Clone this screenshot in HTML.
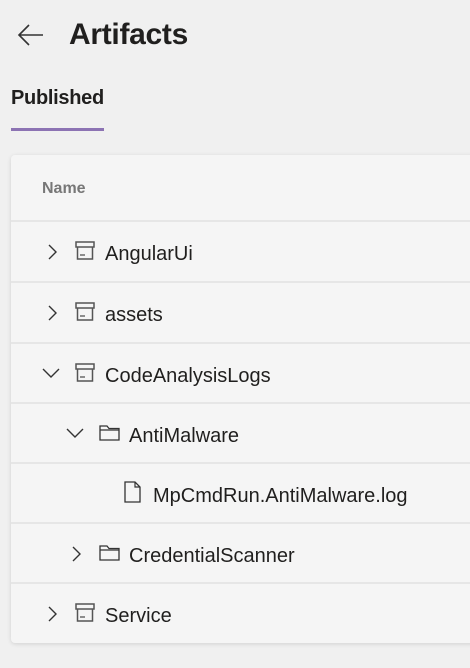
<!DOCTYPE html>
<html><head><style>
body{margin:0;width:470px;height:668px;background:#f0f0f0;font-family:"Liberation Sans",sans-serif;color:#201f1e;overflow:hidden;position:relative}
.abs{position:absolute}
.card{position:absolute;left:11px;top:155px;width:470px;height:488px;background:#f5f5f5;border-radius:4px;box-shadow:0 1px 4px rgba(0,0,0,0.13)}
.row{position:absolute;left:0;width:470px;height:60px;border-top:2px solid #e6e6e6}
.t{position:absolute;font-size:20px;line-height:24px;top:20px}
svg{position:absolute}
</style></head><body>
<svg style="left:17px;top:24px" width="28" height="22" viewBox="0 0 28 22"><path d="M26 11H2M12 1L2 11l10 10" fill="none" stroke="#333" stroke-width="1.6"/></svg>
<div class="abs" style="left:69px;top:18px;font-size:30px;font-weight:bold;letter-spacing:-0.3px">Artifacts</div>
<div class="abs" style="left:11px;top:87px;font-size:20px;font-weight:bold;letter-spacing:-0.3px">Published</div>
<div class="abs" style="left:11px;top:128px;width:93px;height:3px;background:#8c73b3"></div>
<div class="card">
<div class="abs" style="left:31px;top:25px;font-size:16px;font-weight:bold;color:#777">Name</div>
<div class="row" style="top:65px"><svg style="left:35px;top:20px" width="12" height="20"><path d="M3 3l7 7-7 7" fill="none" stroke="#333" stroke-width="1.4"/></svg><svg style="left:64px;top:19px" width="20" height="20"><rect x="1" y="1" width="18" height="5" fill="none" stroke="#555" stroke-width="1.5"/><path d="M2.5 6v12h15V6" fill="none" stroke="#555" stroke-width="1.5"/><path d="M5 14h5" stroke="#555" stroke-width="1.3"/></svg><div class="t" style="left:94px">AngularUi</div></div>
<div class="row" style="top:126px"><svg style="left:35px;top:20px" width="12" height="20"><path d="M3 3l7 7-7 7" fill="none" stroke="#333" stroke-width="1.4"/></svg><svg style="left:64px;top:19px" width="20" height="20"><rect x="1" y="1" width="18" height="5" fill="none" stroke="#555" stroke-width="1.5"/><path d="M2.5 6v12h15V6" fill="none" stroke="#555" stroke-width="1.5"/><path d="M5 14h5" stroke="#555" stroke-width="1.3"/></svg><div class="t" style="left:94px">assets</div></div>
<div class="row" style="top:187px"><svg style="left:30px;top:22px" width="20" height="12"><path d="M2 3l8 8 8-8" fill="none" stroke="#333" stroke-width="1.4"/></svg><svg style="left:64px;top:19px" width="20" height="20"><rect x="1" y="1" width="18" height="5" fill="none" stroke="#555" stroke-width="1.5"/><path d="M2.5 6v12h15V6" fill="none" stroke="#555" stroke-width="1.5"/><path d="M5 14h5" stroke="#555" stroke-width="1.3"/></svg><div class="t" style="left:94px">CodeAnalysisLogs</div></div>
<div class="row" style="top:247px"><svg style="left:54px;top:22px" width="20" height="12"><path d="M2 3l8 8 8-8" fill="none" stroke="#333" stroke-width="1.4"/></svg><svg style="left:88px;top:21px" width="21" height="17"><path d="M1 1h7l2 2.5h10V15H1z" fill="none" stroke="#333" stroke-width="1.3"/><path d="M1 5h19" stroke="#333" stroke-width="1.2"/></svg><div class="t" style="left:118px">AntiMalware</div></div>
<div class="row" style="top:307px"><svg style="left:113px;top:17px" width="18" height="22"><path d="M1 1h10l5 5v15H1z" fill="none" stroke="#333" stroke-width="1.3"/><path d="M11 1v5h5" fill="none" stroke="#333" stroke-width="1.2"/></svg><div class="t" style="left:142px">MpCmdRun.AntiMalware.log</div></div>
<div class="row" style="top:367px"><svg style="left:59px;top:20px" width="12" height="20"><path d="M3 3l7 7-7 7" fill="none" stroke="#333" stroke-width="1.4"/></svg><svg style="left:88px;top:21px" width="21" height="17"><path d="M1 1h7l2 2.5h10V15H1z" fill="none" stroke="#333" stroke-width="1.3"/><path d="M1 5h19" stroke="#333" stroke-width="1.2"/></svg><div class="t" style="left:118px">CredentialScanner</div></div>
<div class="row" style="top:427px"><svg style="left:35px;top:20px" width="12" height="20"><path d="M3 3l7 7-7 7" fill="none" stroke="#333" stroke-width="1.4"/></svg><svg style="left:64px;top:19px" width="20" height="20"><rect x="1" y="1" width="18" height="5" fill="none" stroke="#555" stroke-width="1.5"/><path d="M2.5 6v12h15V6" fill="none" stroke="#555" stroke-width="1.5"/><path d="M5 14h5" stroke="#555" stroke-width="1.3"/></svg><div class="t" style="left:94px">Service</div></div>
</div>
</body></html>
